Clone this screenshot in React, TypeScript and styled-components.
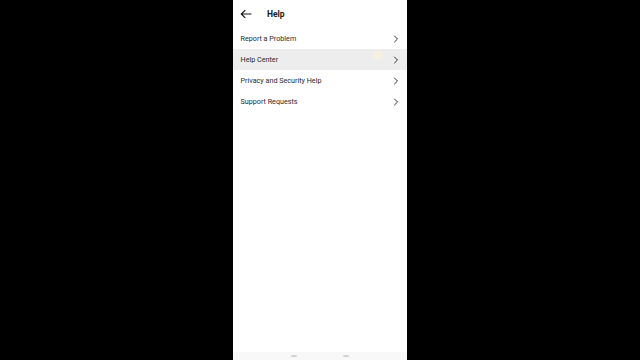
import styled, { createGlobalStyle } from "styled-components";

const GlobalStyle = createGlobalStyle`
  html, body {
    margin: 0;
    padding: 0;
    background: #000;
  }
  body {
    font-family: Roboto, "Liberation Sans", Arial, sans-serif;
    -webkit-font-smoothing: antialiased;
  }
`;

const Stage = styled.div`
  width: 640px;
  height: 360px;
  display: flex;
  justify-content: center;
  background: #000;
  overflow: hidden;
`;

const Screen = styled.div`
  width: 174px;
  height: 360px;
  background: #fff;
  display: flex;
  flex-direction: column;
`;

const Header = styled.div`
  height: 28px;
  display: flex;
  align-items: center;
  padding: 0 0 0 7px;
  gap: 15px;
`;

const BackButton = styled.span`
  display: flex;
  align-items: center;
  width: 12px;
  height: 12px;
`;

const Title = styled.h1`
  margin: 0;
  font-size: 8.5px;
  font-weight: 700;
  color: #1a1a1a;
`;

const List = styled.div`
  display: flex;
  flex-direction: column;
  flex: 1;
`;

const Row = styled.div<{ $pressed?: boolean }>`
  position: relative;
  height: 21px;
  display: flex;
  align-items: center;
  justify-content: space-between;
  padding: 0 8px 0 7.5px;
  background: ${(p) => (p.$pressed ? "#ededed" : "transparent")};
`;

const Label = styled.span`
  font-size: 7.2px;
  color: #2a2a2a;
`;

const Ripple = styled.span`
  position: absolute;
  left: 141px;
  top: 2px;
  width: 8px;
  height: 8px;
  border-radius: 50%;
  background: #f6f1df;
  box-shadow: 0 0 2px 1px #f3efe4;
`;

const BottomBar = styled.div`
  height: 5px;
  background: #f8f8f8;
  display: flex;
  justify-content: center;
  gap: 46px;
  padding-top: 3px;
`;

const NavDot = styled.span`
  width: 6px;
  height: 2px;
  border-radius: 3px 3px 0 0;
  background: #d0d0d0;
`;

function Chevron() {
  return (
    <svg width="6" height="8" viewBox="0 0 6 8" fill="none">
      <path d="M1.5 1 L4.5 4 L1.5 7" stroke="#333" strokeWidth="1" strokeLinecap="round" strokeLinejoin="round" />
    </svg>
  );
}

const items = ["Report a Problem", "Help Center", "Privacy and Security Help", "Support Requests"];

export default function App() {
  return (
    <Stage>
      <GlobalStyle />
      <Screen>
        <Header>
          <BackButton>
            <svg width="12" height="10" viewBox="0 0 12 10" fill="none">
              <path d="M11 5 H1.5 M5 1.3 L1.3 5 L5 8.7" stroke="#1a1a1a" strokeWidth="1.2" strokeLinecap="round" strokeLinejoin="round" />
            </svg>
          </BackButton>
          <Title>Help</Title>
        </Header>
        <List>
          {items.map((item, i) => (
            <Row key={item} $pressed={i === 1}>
              <Label>{item}</Label>
              {i === 1 && <Ripple />}
              <Chevron />
            </Row>
          ))}
        </List>
        <BottomBar>
          <NavDot />
          <NavDot />
        </BottomBar>
      </Screen>
    </Stage>
  );
}
